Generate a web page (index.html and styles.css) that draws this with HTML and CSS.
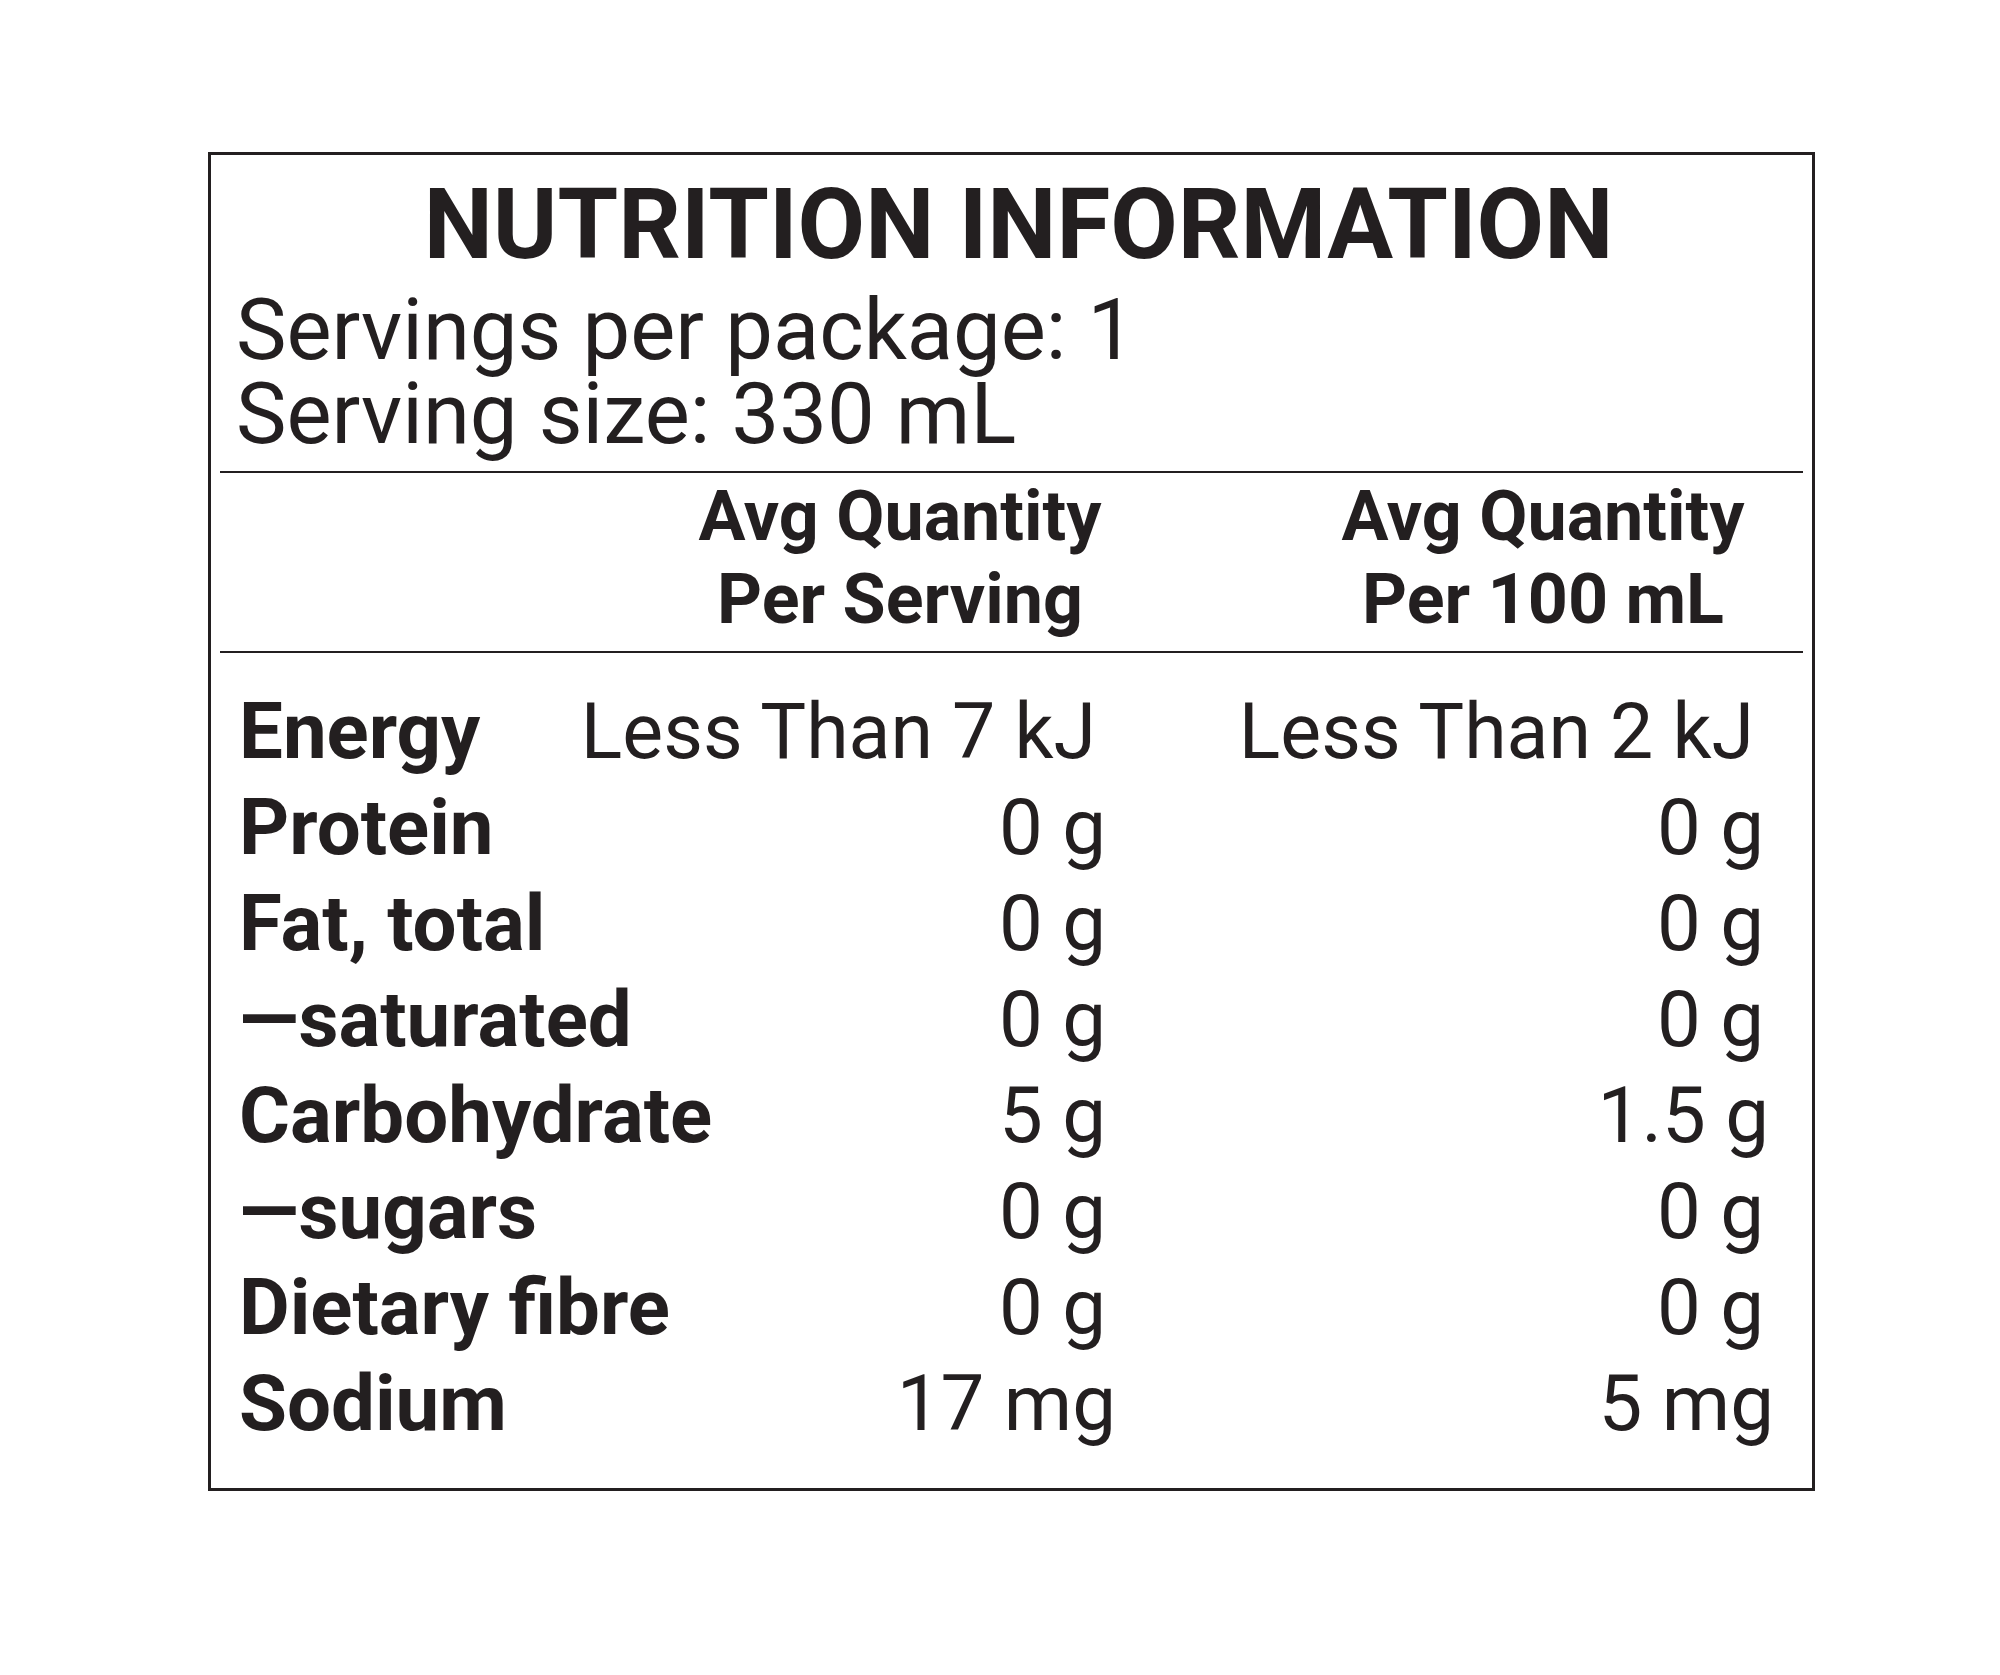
FILE: index.html
```html
<!DOCTYPE html>
<html lang="en">
<head>
<meta charset="utf-8">
<title>Nutrition Information</title>
<link rel="stylesheet" href="styles.css">
</head>
<body>
<section class="panel">
  <header class="panel-head">
    <h1 class="title">NUTRITION INFORMATION</h1>
    <p class="serving">Servings per package: 1</p>
    <p class="serving">Serving size: 330 mL</p>
  </header>
  <hr class="rule rule-top">
  <div class="col-heads">
    <span></span>
    <span class="col-head">Avg Quantity<br>Per Serving</span>
    <span class="col-head">Avg Quantity<br>Per 100 mL</span>
  </div>
  <hr class="rule rule-mid">
  <div class="rows">
    <div class="row"><span class="label">Energy</span><span class="val kj">Less Than 7 kJ</span><span class="val kj">Less Than 2 kJ</span></div>
    <div class="row"><span class="label">Protein</span><span class="val">0 g</span><span class="val">0 g</span></div>
    <div class="row"><span class="label">Fat, total</span><span class="val">0 g</span><span class="val">0 g</span></div>
    <div class="row"><span class="label">—saturated</span><span class="val">0 g</span><span class="val">0 g</span></div>
    <div class="row"><span class="label">Carbohydrate</span><span class="val">5 g</span><span class="val dec">1.5 g</span></div>
    <div class="row"><span class="label">—sugars</span><span class="val">0 g</span><span class="val">0 g</span></div>
    <div class="row"><span class="label">Dietary fibre</span><span class="val">0 g</span><span class="val">0 g</span></div>
    <div class="row"><span class="label">Sodium</span><span class="val mg">17 mg</span><span class="val mg">5 mg</span></div>
  </div>
</section>
</body>
</html>
```
FILE: styles.css
```css
html, body {
  margin: 0;
  padding: 0;
  background: #ffffff;
}

body {
  padding: 152px 0 0 208px;
  font-family: Roboto, "Liberation Sans", Arial, sans-serif;
  color: #231f20;
}

.panel {
  box-sizing: border-box;
  width: 1607px;
  border: 3px solid #231f20;
  padding: 21px 0 36px 0;
}

.panel-head {
  padding: 0 0 15px 25px;
}

.title {
  margin: 0 0 14px -11px;
  text-align: center;
  font-size: 98px;
  line-height: 98px;
  font-weight: 700;
  letter-spacing: 0;
}

.serving {
  margin: 0;
  font-size: 85px;
  line-height: 84px;
  height: 84px;
  font-weight: 400;
  white-space: nowrap;
}

.rule {
  margin: 0 9px;
  border: 0;
  height: 2px;
  background: #231f20;
}

.rule-top {
  margin-bottom: 2px;
}

.col-heads {
  display: grid;
  grid-template-columns: minmax(0, 1fr) 412px 442px;
  column-gap: 216px;
  padding: 0 48px 10px 25px;
}

.col-head {
  text-align: center;
  font-size: 70px;
  line-height: 83px;
  font-weight: 700;
  white-space: nowrap;
}

.rows {
  padding: 31px 48px 0 28px;
}

.row {
  display: grid;
  grid-template-columns: minmax(0, 1fr) 540px 658px;
  font-size: 78px;
  line-height: 96px;
  white-space: nowrap;
}

.label {
  font-weight: 700;
}

.val {
  font-weight: 400;
  text-align: right;
}

.val.kj {
  padding-right: 10px;
  font-size: 77px;
}

.val.mg {
  margin-right: -10px;
}

.val.dec {
  margin-right: -5px;
}
```
